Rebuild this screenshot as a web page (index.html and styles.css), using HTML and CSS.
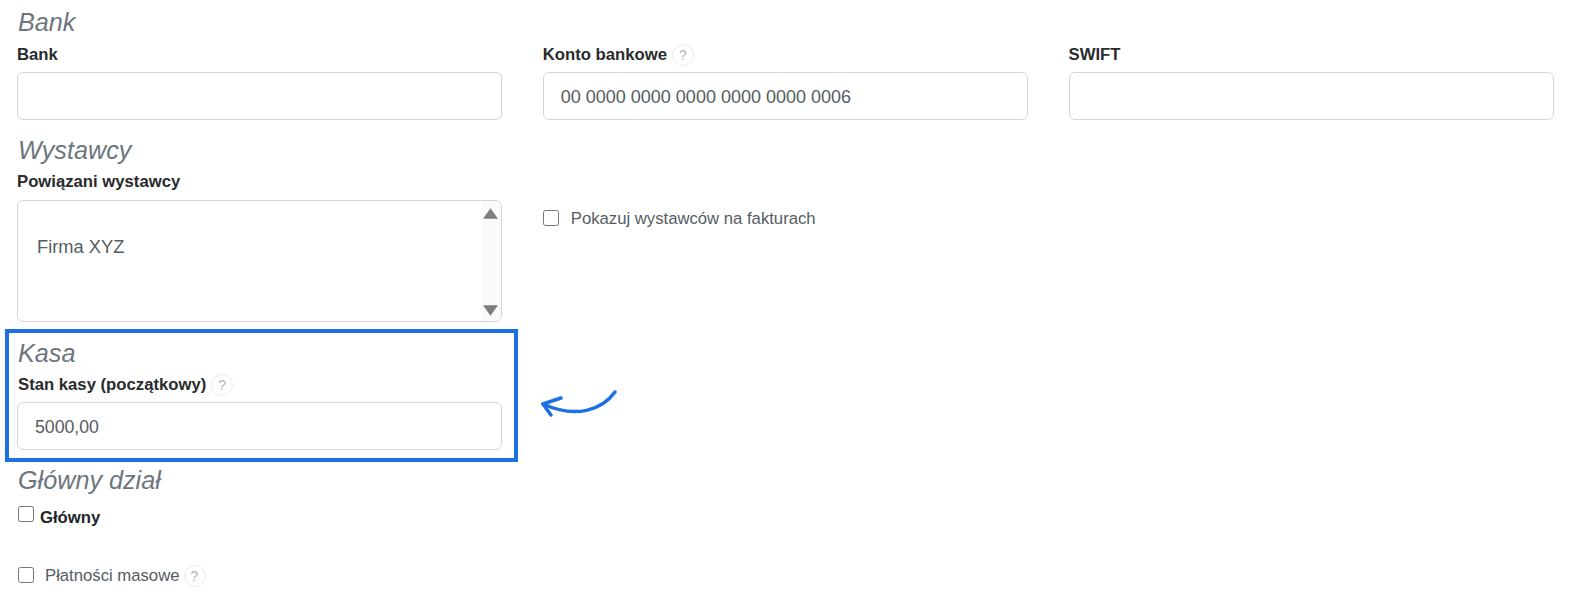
FILE: index.html
```html
<!DOCTYPE html>
<html lang="pl">
<head>
<meta charset="utf-8">
<title>Bank</title>
<link rel="stylesheet" href="styles.css">
</head>
<body>
<main class="page">
  <section class="sec-bank">
    <h2 class="heading">Bank</h2>
    <div class="cols">
      <div class="field">
        <div class="label">Bank</div>
        <div class="input"></div>
      </div>
      <div class="field">
        <div class="label">Konto bankowe <span class="help">?</span></div>
        <div class="input">00 0000 0000 0000 0000 0000 0006</div>
      </div>
      <div class="field">
        <div class="label">SWIFT</div>
        <div class="input"></div>
      </div>
    </div>
  </section>

  <section class="sec-wyst">
    <h2 class="heading">Wystawcy</h2>
    <div class="cols">
      <div class="field">
        <div class="label wyst-label">Powiązani wystawcy</div>
        <div class="multi">
          <div class="multi-list">Firma XYZ</div>
          <div class="scroll">
            <svg class="tri" viewBox="0 0 14 10"><path d="M7 0 14 10H0z"/></svg>
            <svg class="tri" viewBox="0 0 14 10"><path d="M0 0H14L7 10z"/></svg>
          </div>
        </div>
      </div>
      <label class="check show-check"><input type="checkbox" class="box"><span>Pokazuj wystawców na fakturach</span></label>
    </div>
  </section>

  <div class="kasa-row">
    <section class="kasa">
      <h2 class="heading">Kasa</h2>
      <div class="label kasa-label">Stan kasy (początkowy) <span class="help">?</span></div>
      <div class="input kasa-input">5000,00</div>
    </section>
    <svg class="arrow" viewBox="0 0 90 40" width="90" height="40">
      <path d="M79 6C66 24 40 33 7 18" />
      <path d="M25 12 7 18 15 29" />
    </svg>
  </div>

  <section class="sec-main">
    <h2 class="heading">Główny dział</h2>
    <label class="check main-check"><input type="checkbox" class="box"><b>Główny</b></label>
    <label class="check pay-check"><input type="checkbox" class="box"><span>Płatności masowe</span> <span class="help">?</span></label>
  </section>
</main>
</body>
</html>
```

FILE: styles.css
```css
* { box-sizing: border-box; }
html, body { margin: 0; padding: 0; background: #fff; }
body {
  font-family: "Liberation Sans", Arial, sans-serif;
  font-size: 16.7px;
  color: #212529;
  overflow: hidden;
}
.page { width: 1576px; height: 597px; padding: 7px 20px 0 17px; }
.heading {
  margin: 0;
  padding-left: 1px;
  font-size: 25.2px;
  line-height: 30px;
  font-weight: 400;
  font-style: italic;
  color: #6c757d;
}
.cols {
  display: grid;
  grid-template-columns: repeat(3, 485px);
  column-gap: 40.75px;
}
.label {
  display: flex;
  align-items: center;
  gap: 5px;
  height: 22px;
  margin: 7px 0 6px;
  font-weight: 700;
  color: #292b2c;
}
.help {
  display: inline-flex;
  align-items: center;
  justify-content: center;
  width: 22px;
  height: 22px;
  border: 1.5px solid #ececec;
  border-radius: 50%;
  font-size: 14px;
  font-weight: 400;
  color: #b5b5b5;
  background: #fff;
}
.input {
  height: 48px;
  padding: 0 17px;
  border: 1.5px solid #d3d6d8;
  border-radius: 6px;
  font-size: 18px;
  line-height: 49px;
  color: #555c62;
  background: #fff;
}
.sec-wyst { margin-top: 15px; }
.wyst-label { margin: 6px 0 7px; }
.multi {
  display: flex;
  height: 122px;
  border: 1.5px solid #d3d6d8;
  border-radius: 6px;
  overflow: hidden;
}
.multi-list {
  flex: 1;
  padding: 34px 19px 0;
  font-size: 18.3px;
  line-height: 24px;
  color: #555c62;
}
.scroll {
  display: flex;
  flex-direction: column;
  justify-content: space-between;
  align-items: center;
  width: 19px;
  padding: 7px 2px 5px 0;
  background: #fafafa;
}
.tri { display: block; flex: none; width: 15px; height: 11px; fill: #7d7d7d; }
.check { display: flex; align-items: center; color: #555c62; }
.box { width: 16px; height: 16px; margin: 0 0 2px; flex: none; }
.show-check { align-self: start; margin-top: 44px; gap: 12px; }
.kasa-row { display: flex; align-items: flex-start; margin: 7px 0 0 -12px; }
.kasa {
  width: 513px;
  height: 133px;
  padding: 5px 12px 0 8px;
  border: 4px solid #1d6fe5;
}
.kasa-label { margin: 6px 0 6px; padding-left: 1px; }
.kasa-input { width: 485px; font-size: 17.7px; }
.arrow { flex: none; margin: 57px 0 0 18px; fill: none; stroke: #1d6fe5; stroke-width: 3.5px; stroke-linecap: round; stroke-linejoin: round; }
.sec-main { margin-top: 3px; }
.main-check { margin: 10px 0 0 1px; align-items: flex-start; gap: 6px; color: #212529; }
.main-check .box { margin-top: 1px; }
.main-check b { padding-top: 3px; line-height: 20px; }
.pay-check { margin: 37px 0 0 1px; gap: 4px; }
.pay-check .box { margin: 0 7px 3px 0; }
```
